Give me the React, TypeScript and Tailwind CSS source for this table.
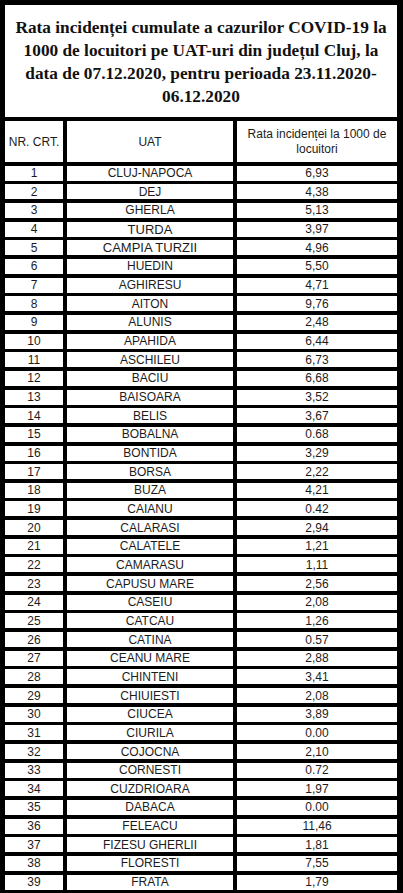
const rows: [string, string][] = [
  ['CLUJ-NAPOCA', '6,93'],
  ['DEJ', '4,38'],
  ['GHERLA', '5,13'],
  ['TURDA', '3,97'],
  ['CAMPIA TURZII', '4,96'],
  ['HUEDIN', '5,50'],
  ['AGHIRESU', '4,71'],
  ['AITON', '9,76'],
  ['ALUNIS', '2,48'],
  ['APAHIDA', '6,44'],
  ['ASCHILEU', '6,73'],
  ['BACIU', '6,68'],
  ['BAISOARA', '3,52'],
  ['BELIS', '3,67'],
  ['BOBALNA', '0.68'],
  ['BONTIDA', '3,29'],
  ['BORSA', '2,22'],
  ['BUZA', '4,21'],
  ['CAIANU', '0.42'],
  ['CALARASI', '2,94'],
  ['CALATELE', '1,21'],
  ['CAMARASU', '1,11'],
  ['CAPUSU MARE', '2,56'],
  ['CASEIU', '2,08'],
  ['CATCAU', '1,26'],
  ['CATINA', '0.57'],
  ['CEANU MARE', '2,88'],
  ['CHINTENI', '3,41'],
  ['CHIUIESTI', '2,08'],
  ['CIUCEA', '3,89'],
  ['CIURILA', '0.00'],
  ['COJOCNA', '2,10'],
  ['CORNESTI', '0.72'],
  ['CUZDRIOARA', '1,97'],
  ['DABACA', '0.00'],
  ['FELEACU', '11,46'],
  ['FIZESU GHERLII', '1,81'],
  ['FLORESTI', '7,55'],
  ['FRATA', '1,79'],
];

export default function App() {
  return (
    <div className="w-[403px] h-[893px] overflow-hidden bg-black pt-[5px] pl-[5px] pr-[6px] pb-[3px] font-['Liberation_Sans',Arial,sans-serif] text-[#1c1c1c]">
      <div className="h-[112px] bg-white flex items-center justify-center pt-[2px] mb-[4px]">
        <p className="font-['Liberation_Serif','Times_New_Roman',serif] font-bold text-[17.3px] leading-[23px] text-center text-[#111] whitespace-nowrap">
          Rata incidenței cumulate a cazurilor COVID-19 la
          <br />
          1000 de locuitori pe UAT-uri din județul Cluj, la
          <br />
          data de 07.12.2020, pentru perioada 23.11.2020-
          <br />
          06.12.2020
        </p>
      </div>
      <div className="grid grid-cols-[58px_166px_1fr] gap-x-[4px] gap-y-[3.66px]">
        <div className="h-[41px] bg-white flex items-center justify-center text-[12px]">
          NR. CRT.
        </div>
        <div className="h-[41px] bg-white flex items-center justify-center text-[12px]">
          UAT
        </div>
        <div className="h-[41px] bg-white flex items-center justify-center text-center text-[12px] leading-[15px] px-1">
          Rata incidenței la 1000 de locuitori
        </div>
        {rows.map(([uat, rate], i) => {
          const big = i === 3 || i === 4;
          return (
            <div key={uat} className="contents">
              <div className="h-[15px] bg-white flex items-center justify-center text-[12px] leading-none">
                {i + 1}
              </div>
              <div
                className={
                  big
                    ? 'h-[15px] bg-white flex items-center justify-center text-[13px] leading-none'
                    : 'h-[15px] bg-white flex items-center justify-center text-[12px] leading-none'
                }
              >
                {uat}
              </div>
              <div className="h-[15px] bg-white flex items-center justify-center text-[12px] leading-none">
                {rate}
              </div>
            </div>
          );
        })}
      </div>
    </div>
  );
}
